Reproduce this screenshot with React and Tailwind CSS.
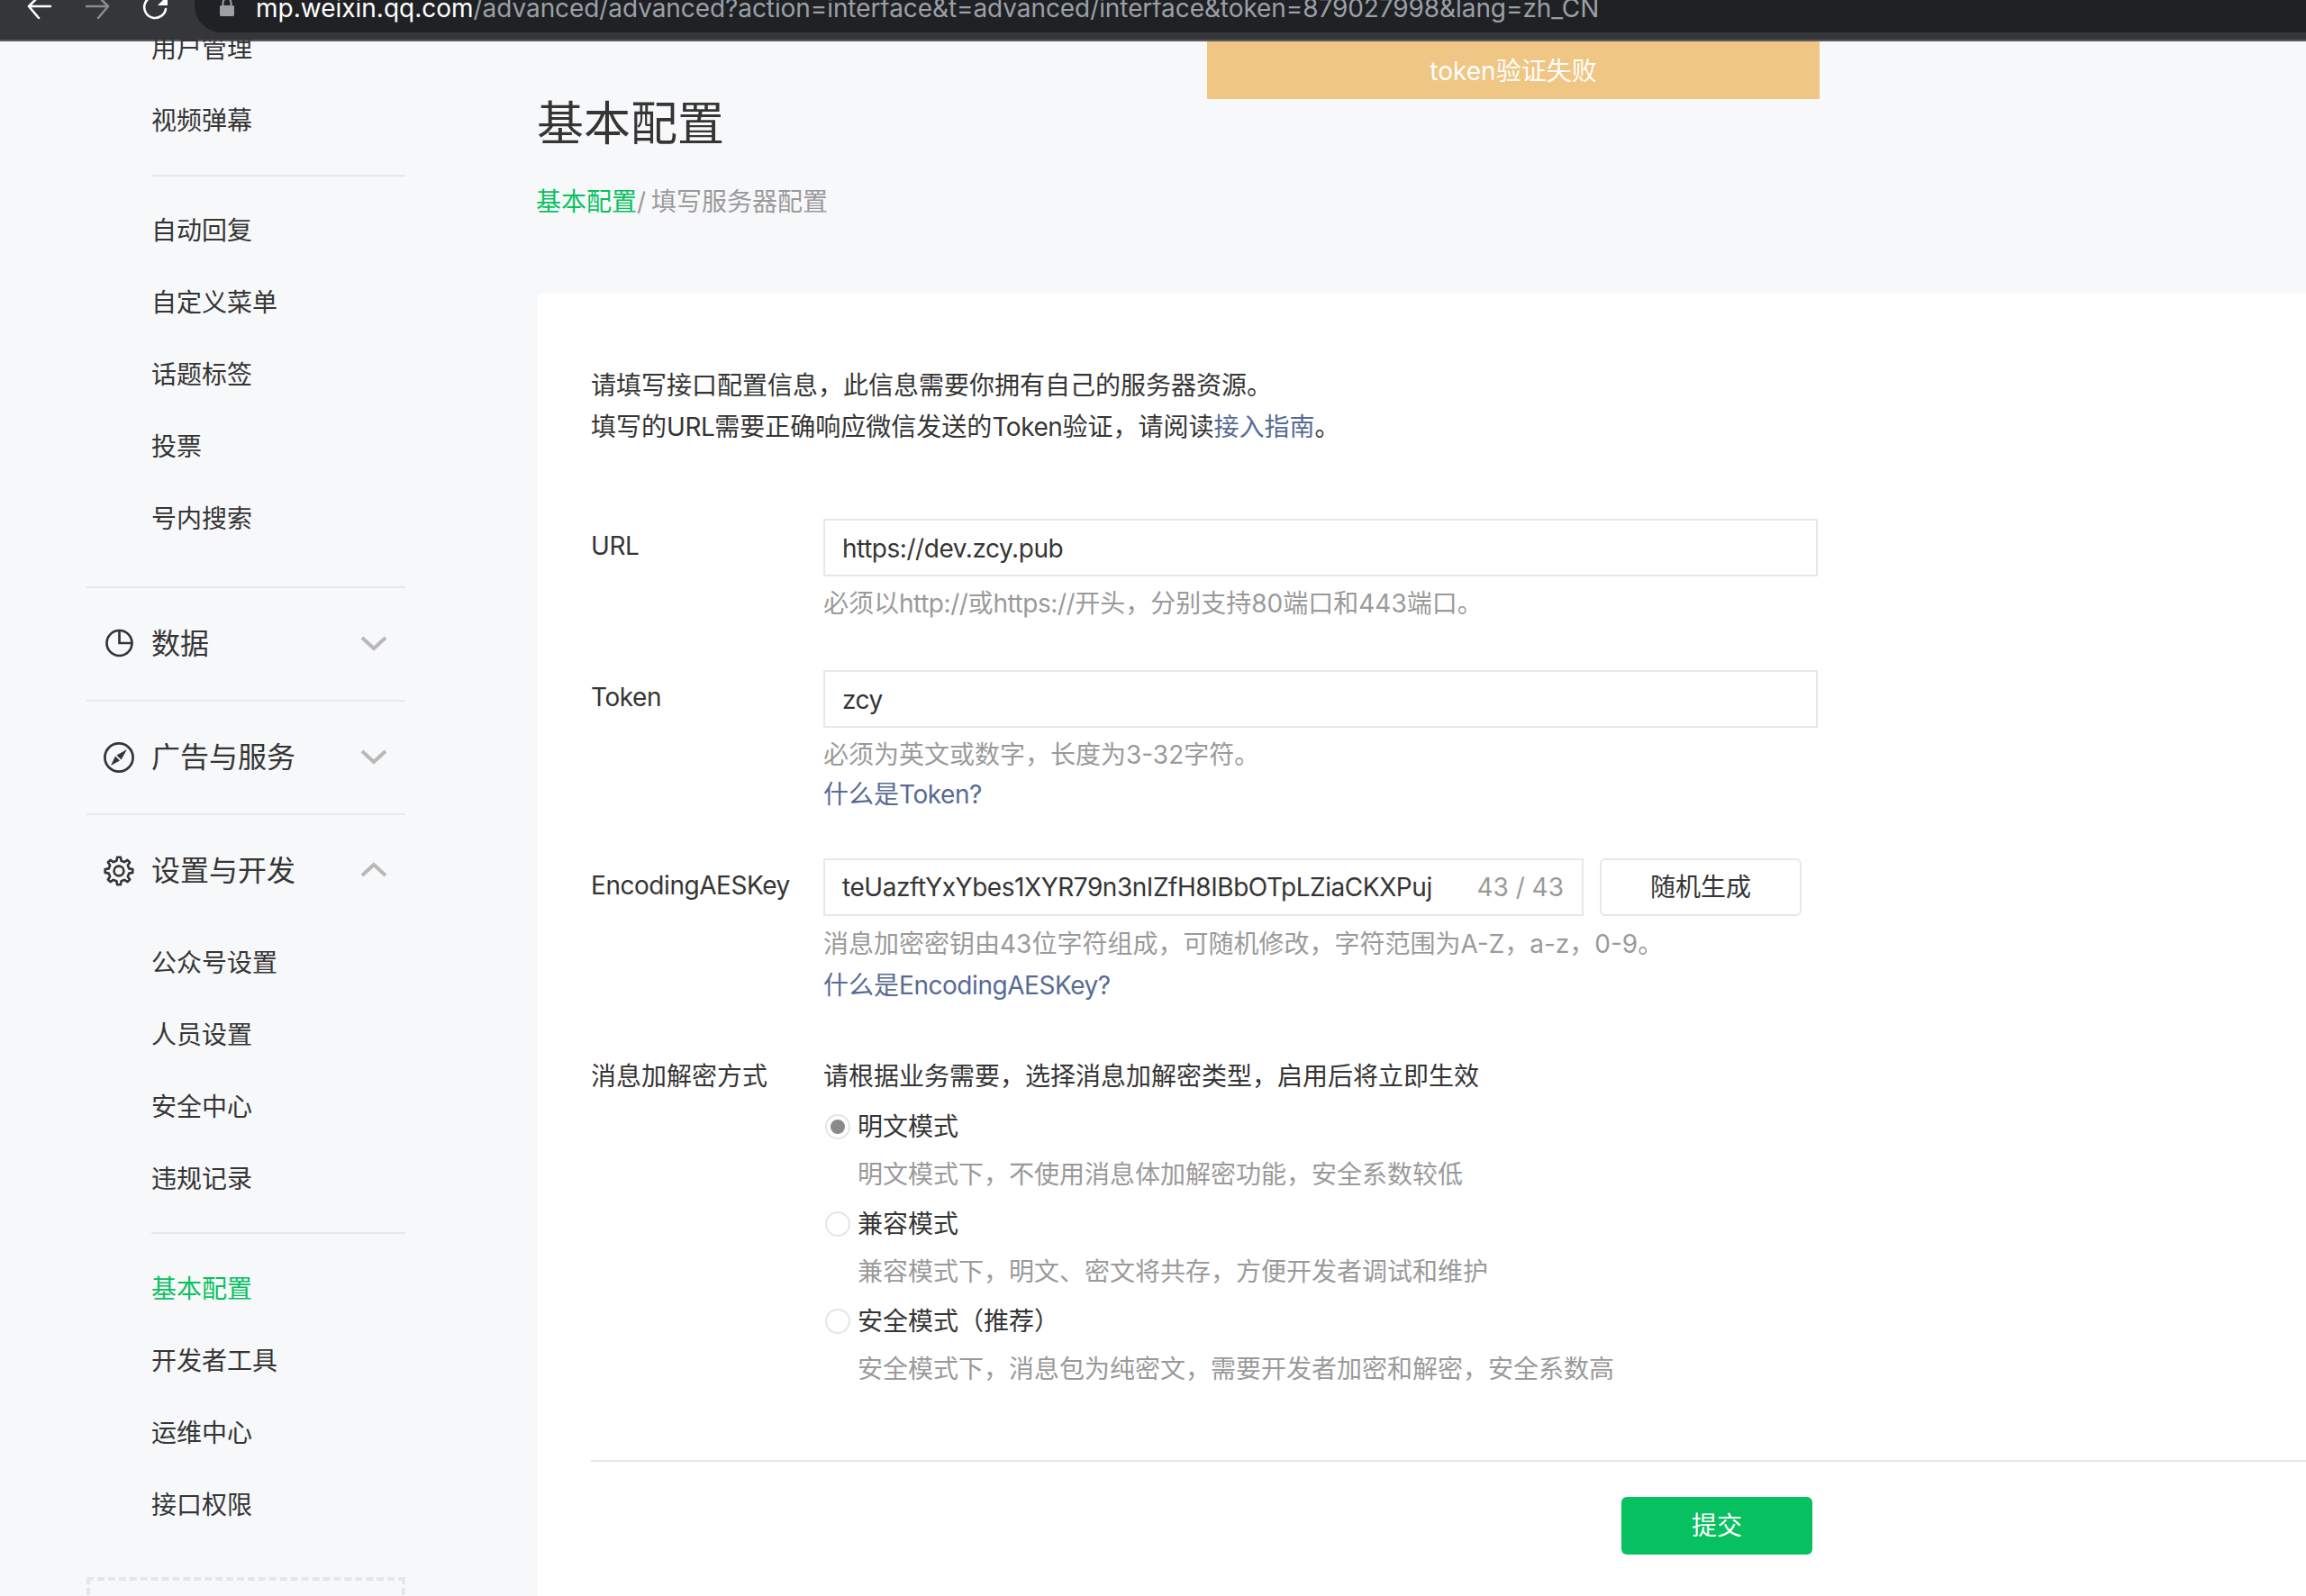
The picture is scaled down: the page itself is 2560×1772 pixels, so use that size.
import React from "react";

const gearPoints = () => {
  const pts = [];
  for (let i = 0; i < 8; i++) {
    const a = i * 45 - 90;
    [[-13, 11.6], [-7, 15.4], [7, 15.4], [13, 11.6]].forEach(([d, r]) => {
      const t = ((a + d) * Math.PI) / 180;
      pts.push(`${(17 + r * Math.cos(t)).toFixed(2)},${(17 + r * Math.sin(t)).toFixed(2)}`);
    });
  }
  return pts.join(" ");
};

function PieIcon() {
  return (
    <svg width="34" height="34" viewBox="0 0 34 34" fill="none" stroke="#353535" strokeWidth="2.7">
      <circle cx="17.5" cy="16" r="14" />
      <path d="M17.5 1.500v14.500h15" />
    </svg>
  );
}

function CompassIcon() {
  return (
    <svg width="34" height="34" viewBox="0 0 34 34" fill="none">
      <circle cx="17" cy="17" r="15.6" stroke="#353535" strokeWidth="2.7" />
      <path d="M26 8l-11.500 6.500 5 5z" fill="#353535" />
      <path d="M8 26l5-10.500 5 5z" fill="#353535" />
    </svg>
  );
}

function GearIcon() {
  return (
    <svg width="34" height="34" viewBox="0 0 34 34" fill="none" stroke="#353535" strokeWidth="2.6" strokeLinejoin="round">
      <polygon points={gearPoints()} />
      <circle cx="17" cy="17" r="5.4" />
    </svg>
  );
}

function Chevron({ up }) {
  return (
    <svg width="30" height="18" viewBox="0 0 30 18" fill="none" stroke="#b8b8b8" strokeWidth="4">
      <path d={up ? "M2 15L15 3l13 12" : "M2 3l13 12L28 3"} />
    </svg>
  );
}

function NavItem({ children, active }) {
  return (
    <div className={active ? "h-20 flex items-center pl-[168px] text-[#07c160]" : "h-20 flex items-center pl-[168px]"}>
      {children}
    </div>
  );
}

function Divider({ className }) {
  return <div className={`h-[2px] bg-[#e7e8ea] ${className}`} />;
}

function NavGroup({ icon, label, up }) {
  return (
    <div className="ml-[96px] w-[354px] h-[124px] flex items-center pl-[19px] pr-[20px] text-[32px]">
      <div className="w-[34px] h-[34px]">{icon}</div>
      <span className="ml-[19px]">{label}</span>
      <div className="ml-auto flex -mt-[2px]">
        <Chevron up={up} />
      </div>
    </div>
  );
}

function Sidebar() {
  return (
    <aside className="w-[597px] shrink-0 -mt-[32px] text-[28px] text-[#353535]">
      <NavItem>用户管理</NavItem>
      <NavItem>视频弹幕</NavItem>
      <Divider className="ml-[168px] w-[282px] mt-[20px] mb-[20px]" />
      <NavItem>自动回复</NavItem>
      <NavItem>自定义菜单</NavItem>
      <NavItem>话题标签</NavItem>
      <NavItem>投票</NavItem>
      <NavItem>号内搜索</NavItem>
      <Divider className="ml-[96px] w-[354px] mt-[35px]" />
      <NavGroup icon={<PieIcon />} label="数据" />
      <Divider className="ml-[96px] w-[354px]" />
      <NavGroup icon={<CompassIcon />} label="广告与服务" />
      <Divider className="ml-[96px] w-[354px]" />
      <NavGroup icon={<GearIcon />} label="设置与开发" up />
      <NavItem>公众号设置</NavItem>
      <NavItem>人员设置</NavItem>
      <NavItem>安全中心</NavItem>
      <NavItem>违规记录</NavItem>
      <Divider className="ml-[168px] w-[282px] mt-[19px] mb-[21px]" />
      <NavItem active>基本配置</NavItem>
      <NavItem>开发者工具</NavItem>
      <NavItem>运维中心</NavItem>
      <NavItem>接口权限</NavItem>
      <div className="ml-[96px] w-[354px] h-[80px] mt-[40px] border-4 border-dashed border-[#e4e6e9]" />
    </aside>
  );
}

function BrowserBar() {
  return (
    <div className="h-[46px] shrink-0 bg-[#35363a] border-b-2 border-[#5a5b5e] flex items-start pl-[30px] overflow-hidden">
      <svg className="-mt-[7px] shrink-0" width="28" height="28" viewBox="0 0 28 28" fill="none" stroke="#ffffff" strokeWidth="2.6" strokeLinecap="round" strokeLinejoin="round">
        <path d="M26 14H3M13 3L2 14l11 13" />
      </svg>
      <svg className="-mt-[7px] ml-9 shrink-0" width="28" height="28" viewBox="0 0 28 28" fill="none" stroke="#8a8b8e" strokeWidth="2.6" strokeLinecap="round" strokeLinejoin="round">
        <path d="M2 14h23M15 3l11 11-11 13" />
      </svg>
      <svg className="-mt-[6px] ml-9 shrink-0" width="28" height="28" viewBox="0 0 28 28" fill="none" stroke="#ffffff" strokeWidth="2.6" strokeLinecap="round">
        <path d="M26 16A12 12 0 1 1 18 2.600" />
        <path d="M17 12L28 1v11z" fill="#ffffff" stroke="none" />
      </svg>
      <div className="ml-[30px] flex-1 h-[36px] bg-[#202124] rounded-bl-[30px] flex items-start pl-[28px] font-['Inter','Liberation_Sans',sans-serif] text-[28px] leading-[28px] whitespace-nowrap">
        <svg className="-mt-[1px] shrink-0" width="16" height="20" viewBox="0 0 16 20" fill="#9aa0a6">
          <path d="M1.500 7h13A1.500 1.500 0 0 1 16 8.500v9a1.500 1.500 0 0 1-1.500 1.500h-13A1.500 1.500 0 0 1 0 17.500v-9A1.500 1.500 0 0 1 1.500 7z" />
          <path d="M3.500 8V4a4.500 4.500 0 0 1 9 0v4" fill="none" stroke="#9aa0a6" strokeWidth="2" />
        </svg>
        <div className="ml-[24px] -mt-[5px]">
          <span className="text-white">mp.weixin.qq.com</span>
          <span className="text-[#9aa0a6] tracking-[-0.08px]">/advanced/advanced?action=interface&amp;t=advanced/interface&amp;token=879027998&amp;lang=zh_CN</span>
        </div>
      </div>
    </div>
  );
}

// latin runs sit a bit tighter than Inter's default in the reference
function L({ children }) {
  return <span className="tracking-[-0.45px]">{children}</span>;
}

function FormRow({ label, className, children }) {
  return (
    <div className={`flex ${className}`}>
      <div className="w-[258px] shrink-0 leading-[44px] pt-[8px]">{label}</div>
      <div className="flex-1">{children}</div>
    </div>
  );
}

function TextBox({ children }) {
  return (
    <div className="h-[64px] w-[1104px] border-2 border-[#e7e7eb] bg-white flex items-center pl-[19px] pt-[1px]">
      {children}
    </div>
  );
}

function Hint({ children, className = "" }) {
  return <div className={`leading-[44px] text-[#9a9a9a] ${className}`}>{children}</div>;
}

function Radio({ checked, label }) {
  return (
    <div className="h-[54px] flex items-center">
      <div className="ml-[2px] w-[28px] h-[28px] rounded-full border-2 border-[#e3e5ea] bg-white flex items-center justify-center">
        {checked && <div className="w-[16px] h-[16px] rounded-full bg-[#8a8a8a]" />}
      </div>
      <span className="ml-[8px]">{label}</span>
    </div>
  );
}

function RadioDesc({ children }) {
  return <div className="h-[54px] flex items-center pl-[38px] pb-[2px] text-[#9a9a9a]">{children}</div>;
}

export default function App() {
  return (
    <div className="w-[2560px] h-[1772px] overflow-hidden flex flex-col relative bg-[#f7f8fa] font-['Inter','Noto_Sans_CJK_SC',sans-serif] text-[#353535]">
      <BrowserBar />
      <div className="flex-1 flex min-h-0">
        <Sidebar />
        <main className="flex-1 flex flex-col min-w-0">
          <h2 className="mt-[62px] -ml-[1px] text-[52px] leading-[60px]">基本配置</h2>
          <div className="mt-[36px] -ml-[2px] text-[28px] leading-[40px] text-[#9a9a9a]">
            <span className="text-[#07c160]">基本配置</span>
            <span className="tracking-[-1px]">/ </span>填写服务器配置
          </div>
          <div className="mt-[82px] flex-1 bg-white rounded-tl-[4px] pl-[59px] pt-[79px] text-[28px]">
            <div className="leading-[46px]">
              <p>请填写接口配置信息，此信息需要你拥有自己的服务器资源。</p>
              <p>
                填写的<L>URL</L>需要正确响应微信发送的<L>Token</L>验证，请阅读<span className="text-[#576b95]">接入指南</span>。
              </p>
            </div>

            <FormRow label={<L>URL</L>} className="mt-[79px]">
              <TextBox><L>https://dev.zcy.pub</L></TextBox>
              <Hint className="mt-[8px]">必须以<L>http://</L>或<L>https://</L>开头，分别支持80端口和443端口。</Hint>
            </FormRow>

            <FormRow label={<L>Token</L>} className="mt-[52px]">
              <TextBox><L>zcy</L></TextBox>
              <Hint className="mt-[8px]">必须为英文或数字，长度为3-32字符。</Hint>
              <div className="leading-[44px] text-[#576b95]">什么是<L>Token?</L></div>
            </FormRow>

            <FormRow label={<L>EncodingAESKey</L>} className="mt-[49px]">
              <div className="flex">
                <div className="h-[64px] w-[844px] border-2 border-[#e7e7eb] flex items-center pl-[19px] pr-[20px]">
                  <L>teUazftYxYbes1XYR79n3nIZfH8IBbOTpLZiaCKXPuj</L>
                  <span className="ml-auto text-[#9a9a9a]">43 / 43</span>
                </div>
                <div className="ml-[18px] h-[64px] w-[224px] border-2 border-[#e7e7eb] rounded-[6px] flex items-center justify-center">
                  随机生成
                </div>
              </div>
              <Hint className="mt-[9px]">消息加密密钥由43位字符组成，可随机修改，字符范围为A-Z，a-z，0-9。</Hint>
              <div className="mt-[2px] leading-[44px] text-[#576b95]">什么是<L>EncodingAESKey?</L></div>
            </FormRow>

            <div className="flex mt-[49px]">
              <div className="w-[258px] shrink-0 leading-[44px] pt-[8px]">消息加解密方式</div>
              <div className="flex-1 pt-[8px]">
                <div className="leading-[44px] mb-[7px]">请根据业务需要，选择消息加解密类型，启用后将立即生效</div>
                <Radio checked label="明文模式" />
                <RadioDesc>明文模式下，不使用消息体加解密功能，安全系数较低</RadioDesc>
                <Radio label="兼容模式" />
                <RadioDesc>兼容模式下，明文、密文将共存，方便开发者调试和维护</RadioDesc>
                <Radio label="安全模式（推荐）" />
                <RadioDesc>安全模式下，消息包为纯密文，需要开发者加密和解密，安全系数高</RadioDesc>
              </div>
            </div>

            <div className="mt-[73px] h-[2px] bg-[#e7e7eb]" />
            <div className="mt-[39px] ml-[1144px] w-[212px] h-[64px] rounded-[6px] bg-[#07c160] text-white flex items-center justify-center">
              提交
            </div>
          </div>
        </main>
      </div>

      <div className="absolute left-[1340px] top-[46px] w-[680px] h-[64px] pt-[1px] bg-[#f0c684] text-white text-[28px] flex items-center justify-center">
        token验证失败
      </div>
    </div>
  );
}
